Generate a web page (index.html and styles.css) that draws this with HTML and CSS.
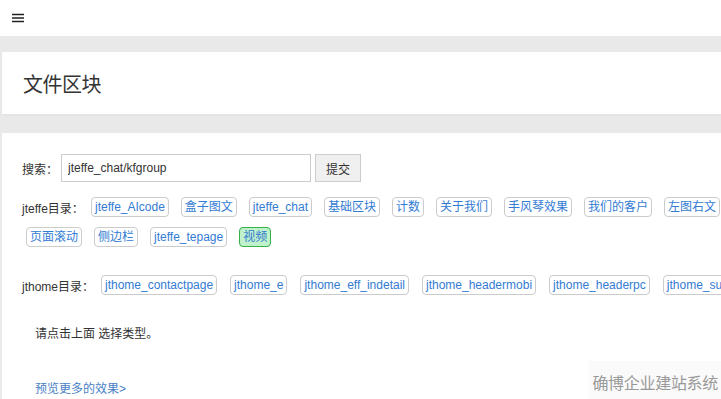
FILE: index.html
```html
<!DOCTYPE html>
<html>
	<head>
		<meta charset="utf-8">
		<meta name="viewport" content="width=device-width,initial-scale=1">
		<title>文件区块</title>
		<link rel="stylesheet" href="styles.css">
	</head>
	<body>
		<header class="topbar">
			<span class="menu-btn">
				<svg width="12" height="10" viewBox="0 0 12 10"><path d="M0 1.5h12M0 5h12M0 8.5h12" stroke="#222" stroke-width="1.4"/></svg>
			</span>
		</header>
		<div class="page">
			<section class="card title-card">
				<h1>文件区块</h1>
			</section>
			<section class="card main-card">
				<form class="search">
					<label>搜索：</label>
					<input type="text" value="jteffe_chat/kfgroup">
					<button type="button">提交</button>
				</form>
				<div class="dir">
					<span class="dir-label">jteffe目录：</span>
					<a class="tag">jteffe_AIcode</a>
					<a class="tag">盒子图文</a>
					<a class="tag">jteffe_chat</a>
					<a class="tag">基础区块</a>
					<a class="tag">计数</a>
					<a class="tag">关于我们</a>
					<a class="tag">手风琴效果</a>
					<a class="tag">我们的客户</a>
					<a class="tag">左图右文</a>
					<a class="tag">页面滚动</a>
					<a class="tag">侧边栏</a>
					<a class="tag">jteffe_tepage</a>
					<a class="tag active">视频</a>
				</div>
				<div class="dir dir-nowrap">
					<span class="dir-label">jthome目录：</span>
					<a class="tag">jthome_contactpage</a>
					<a class="tag">jthome_e</a>
					<a class="tag">jthome_eff_indetail</a>
					<a class="tag">jthome_headermobi</a>
					<a class="tag">jthome_headerpc</a>
					<a class="tag">jthome_support</a>
				</div>
				<p class="hint">请点击上面 选择类型。</p>
				<p class="more"><a href="#">预览更多的效果&gt;</a></p>
			</section>
		</div>
		<div class="watermark">确博企业建站系统</div>
	</body>
</html>
```

FILE: styles.css
```css
* {
	margin: 0;
	padding: 0;
	box-sizing: border-box;
}
body {
	font-family: "Liberation Sans", Arial, "Noto Sans CJK SC", sans-serif;
	font-size: 12px;
	color: #333;
	background: #e9e9e9;
	overflow: hidden;
	height: 399px;
}
.topbar {
	height: 36px;
	background: #fff;
	padding: 13px 0 0 12px;
}
.menu-btn {
	display: block;
	width: 12px;
	height: 10px;
}
.menu-btn svg {
	display: block;
}
.page {
	padding: 16px 0 0 2px;
}
.card {
	background: #fff;
}
.title-card {
	height: 62px;
	padding: 0 21px;
	display: flex;
	align-items: center;
	margin-bottom: 19px;
	box-shadow: 0 1px 2px rgba(0,0,0,0.04);
}
.title-card h1 {
	font-size: 20px;
	font-weight: normal;
	color: #333;
	letter-spacing: -0.5px;
}
.main-card {
	padding: 21px 20px 30px 20px;
	min-height: 300px;
}
.search {
	display: flex;
	align-items: center;
	height: 28px;
}
.search label {
	width: 39px;
}
.search input {
	width: 250px;
	height: 28px;
	border: 1px solid #ccc;
	padding: 0 6px;
	font: inherit;
	font-size: 12px;
	color: #333;
}
.search button {
	margin-left: 4px;
	width: 46px;
	height: 28px;
	border: 1px solid #ccc;
	background: #f0f0f0;
	font: inherit;
	color: #333;
}
.dir {
	width: 730px;
	margin-top: 15px;
	display: flex;
	flex-wrap: wrap;
	align-items: center;
	column-gap: 8px;
	row-gap: 10px;
}
.dir-nowrap {
	margin-top: 28px;
	flex-wrap: nowrap;
	column-gap: 9px;
}
.dir-label {
	width: 57px;
	white-space: nowrap;
}
.dir-nowrap .dir-label {
	width: 66px;
}
.tag {
	display: block;
	flex: none;
	line-height: 16px;
	padding: 1px 3px;
	margin-left: 4px;
	border: 1px solid #ccc;
	border-radius: 4px;
	color: #337bd3;
	white-space: nowrap;
}
.tag.active {
	background: #bff2cb;
	border-color: #35b04a;
}
.hint {
	margin: 29px 0 0 13px;
}
.more {
	margin: 38px 0 0 13px;
}
.more a {
	color: #4a7fc6;
	text-decoration: none;
}
.watermark {
	position: fixed;
	right: 0;
	bottom: 0;
	padding: 9px 3px 5px 3px;
	background: #fafafa;
	color: #999;
	font-size: 16px;
	letter-spacing: -0.3px;
}
```
